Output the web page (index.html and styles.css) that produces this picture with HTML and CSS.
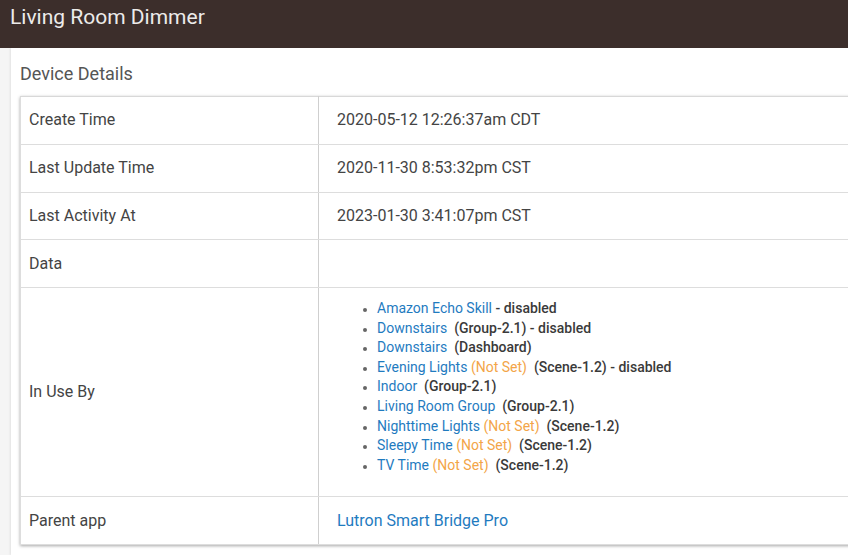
FILE: index.html
```html
<!DOCTYPE html>
<html>
<head>
<meta charset="utf-8">
<link rel="stylesheet" href="styles.css">
</head>
<body>
<header class="topbar"><h1 class="title">Living Room Dimmer</h1></header>
<div class="page">
  <main class="card">
    <h2 class="section-title">Device Details</h2>
    <table class="details">
      <tr><td class="label">Create Time</td><td class="value">2020-05-12 12:26:37am CDT</td></tr>
      <tr><td class="label">Last Update Time</td><td class="value">2020-11-30 8:53:32pm CST</td></tr>
      <tr><td class="label">Last Activity At</td><td class="value">2023-01-30 3:41:07pm CST</td></tr>
      <tr><td class="label">Data</td><td class="value"></td></tr>
      <tr class="uses-row"><td class="label">In Use By</td><td class="value list-cell">
        <ul class="uses">
          <li><a class="link">Amazon Echo Skill</a> <span class="meta">- disabled</span></li>
          <li><a class="link">Downstairs</a> &nbsp;<span class="meta">(Group-2.1) - disabled</span></li>
          <li><a class="link">Downstairs</a> &nbsp;<span class="meta">(Dashboard)</span></li>
          <li><a class="link">Evening Lights</a> <span class="notset">(Not Set)</span> &nbsp;<span class="meta">(Scene-1.2) - disabled</span></li>
          <li><a class="link">Indoor</a> &nbsp;<span class="meta">(Group-2.1)</span></li>
          <li><a class="link">Living Room Group</a> &nbsp;<span class="meta">(Group-2.1)</span></li>
          <li><a class="link">Nighttime Lights</a> <span class="notset">(Not Set)</span> &nbsp;<span class="meta">(Scene-1.2)</span></li>
          <li><a class="link">Sleepy Time</a> <span class="notset">(Not Set)</span> &nbsp;<span class="meta">(Scene-1.2)</span></li>
          <li><a class="link">TV Time</a> <span class="notset">(Not Set)</span> &nbsp;<span class="meta">(Scene-1.2)</span></li>
        </ul>
      </td></tr>
      <tr><td class="label">Parent app</td><td class="value"><a class="link parent">Lutron Smart Bridge Pro</a></td></tr>
    </table>
  </main>
</div>
</body>
</html>
```

FILE: styles.css
```css
html, body {
  margin: 0;
  padding: 0;
  overflow: hidden;
  background: #f5f5f5;
  font-family: Roboto, "Liberation Sans", sans-serif;
  color: #444;
}
.topbar {
  height: 48px;
  background: #3c2e2b;
  display: flex;
  align-items: flex-start;
  padding-left: 10px;
}
.title {
  margin: 4px 0 0 0;
  font-size: 21px;
  font-weight: 400;
  color: #ecebea;
  line-height: 26px;
}
.page {
  padding-left: 11px;
  overflow: hidden;
}
.card {
  background: #fff;
  width: 837px;
  height: 507px;
  padding: 14px 0 0 9px;
  box-sizing: border-box;
  box-shadow: -1px 0 2px rgba(0,0,0,0.08);
  overflow: hidden;
}
.section-title {
  margin: 0 0 11px 0;
  font-size: 18px;
  font-weight: 400;
  color: #555;
  line-height: 23px;
}
.details {
  border-collapse: collapse;
  width: 860px;
  font-size: 16px;
  box-shadow: 0 1px 3px rgba(0,0,0,0.35);
}
.details td {
  border: 1px solid #ddd;
  height: 46.75px;
  line-height: 20px;
  vertical-align: middle;
  color: #444;
}
.label {
  width: 281px;
  padding: 0 8px;
}
.value {
  padding: 0 18px;
}
.details tr:first-child td { border-top-color: #d8d8d8; }
.details td.label { border-right-color: #cfcfcf; }
.list-cell {
  padding-top: 11px;
  padding-bottom: 21px;
}
.uses {
  margin: 0;
  padding-left: 40px;
  font-size: 14px;
  line-height: 19.6px;
}
.uses li::marker { color: #666; font-size: 12px; }
.link {
  color: #1f7bbf;
  text-decoration: none;
}
.parent { font-size: 16px; }
.notset { color: #f3a548; }
.meta { color: #3a3a3a; font-weight: 500; }
```
